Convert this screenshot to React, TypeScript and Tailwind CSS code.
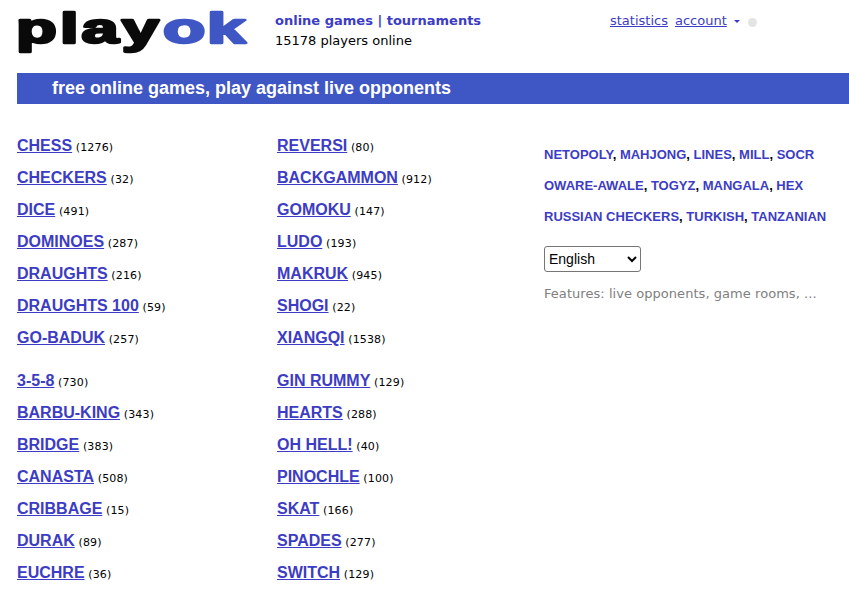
const leftTop = [
    ["CHESS", "1276"], ["CHECKERS", "32"], ["DICE", "491"], ["DOMINOES", "287"],
    ["DRAUGHTS", "216"], ["DRAUGHTS 100", "59"], ["GO-BADUK", "257"],
];
const leftBottom = [
    ["3-5-8", "730"], ["BARBU-KING", "343"], ["BRIDGE", "383"], ["CANASTA", "508"],
    ["CRIBBAGE", "15"], ["DURAK", "89"], ["EUCHRE", "36"],
];
const midTop = [
    ["REVERSI", "80"], ["BACKGAMMON", "912"], ["GOMOKU", "147"], ["LUDO", "193"],
    ["MAKRUK", "945"], ["SHOGI", "22"], ["XIANGQI", "1538"],
];
const midBottom = [
    ["GIN RUMMY", "129"], ["HEARTS", "288"], ["OH HELL!", "40"], ["PINOCHLE", "100"],
    ["SKAT", "166"], ["SPADES", "277"], ["SWITCH", "129"],
];
const extras = [
    ["NETOPOLY", "MAHJONG", "LINES", "MILL", "SOCR"],
    ["OWARE-AWALE", "TOGYZ", "MANGALA", "HEX"],
    ["RUSSIAN CHECKERS", "TURKISH", "TANZANIAN"],
];

function GameList({ games }: { games: string[][] }) {
    return (
        <div className="flex flex-col">
            {games.map(([name, count]) => (
                <div key={name} className="h-[32px] leading-[32px] whitespace-nowrap">
                    <a href="#" className="font-['Liberation_Sans',sans-serif] text-[16px] font-bold text-[#3c3cc4] underline">{name}</a>
                    <span className="font-['DejaVu_Sans',sans-serif] text-[11px] tracking-[0.15px] text-black"> ({count})</span>
                </div>
            ))}
        </div>
    );
}

function Logo() {
    return (
        <svg width="244" height="73" viewBox="0 0 244 73" className="shrink-0">
            <text x="3" y="43" fontFamily="'Liberation Sans', sans-serif" fontWeight="700" fontSize="43" letterSpacing="2" textLength="146" lengthAdjust="spacingAndGlyphs" stroke="#0a0a0a" strokeWidth="2.6" strokeLinejoin="round" fill="#0a0a0a">play</text>
            <text x="150" y="43" fontFamily="'Liberation Sans', sans-serif" fontWeight="700" fontSize="43" letterSpacing="1" textLength="84" lengthAdjust="spacingAndGlyphs" stroke="#3f57c4" strokeWidth="2.6" strokeLinejoin="round" fill="#3f57c4">ok</text>
        </svg>
    );
}

export default function App() {
    return (
        <div className="h-[596px] w-[849px] overflow-hidden bg-white font-['DejaVu_Sans',sans-serif]">
            <header className="flex h-[73px] pl-[13px]">
                <Logo />
                <div className="ml-[18px] w-[335px] pt-[11px] text-[13px] leading-[20px]">
                    <div className="font-bold text-[#3c3cc4]">
                        <a href="#">online games</a> | <a href="#">tournaments</a>
                    </div>
                    <div className="text-black">15178 players online</div>
                </div>
                <div className="mt-[11px] flex h-[20px] items-center text-[13px] leading-[20px] text-[#3c3cc4]">
                    <a href="#" className="underline">statistics</a>
                    <a href="#" className="ml-[7px] underline">account</a>
                    <span className="ml-[7px] h-0 w-0 border-x-[3px] border-t-[3px] border-x-transparent border-t-[#3c3cc4]"></span>
                    <span className="ml-[8px] mt-[3px] h-[9px] w-[9px] rounded-full bg-[#e4e4e4]"></span>
                </div>
            </header>

            <div className="ml-[17px] flex h-[31px] items-center bg-[#3f57c4] pl-[35px] font-['Liberation_Sans',sans-serif] text-[18px] font-bold text-white">
                free online games, play against live opponents
            </div>

            <main className="flex pl-[17px] pt-[26px]">
                <div className="w-[260px]">
                    <GameList games={leftTop} />
                    <div className="mt-[11px]"><GameList games={leftBottom} /></div>
                </div>
                <div className="w-[267px]">
                    <GameList games={midTop} />
                    <div className="mt-[11px]"><GameList games={midBottom} /></div>
                </div>
                <div className="pt-[9px]">
                    {extras.map((line, i) => (
                        <div key={i} className="h-[31px] font-['Liberation_Sans',sans-serif] text-[13px] font-bold leading-[31px] whitespace-nowrap text-black">
                            {line.map((name, j) => (
                                <span key={name}>
                                    <a href="#" className="text-[#3c3cc4]">{name}</a>
                                    {j < line.length - 1 ? ", " : ""}
                                </span>
                            ))}
                        </div>
                    ))}
                    <select className="mt-[14px] block h-[26px] w-[97px] rounded-[3px] border border-[#767676] bg-white pl-[0px] font-['Liberation_Sans',sans-serif] text-[14px] text-black" defaultValue="English" style={{ appearance: "auto" }}>
                        <option>English</option>
                    </select>
                    <p className="mt-[13px] text-[13px] leading-[18px] tracking-[0.05px] whitespace-nowrap text-[#808080]">Features: live opponents, game rooms, ...</p>
                </div>
            </main>
        </div>
    );
}
